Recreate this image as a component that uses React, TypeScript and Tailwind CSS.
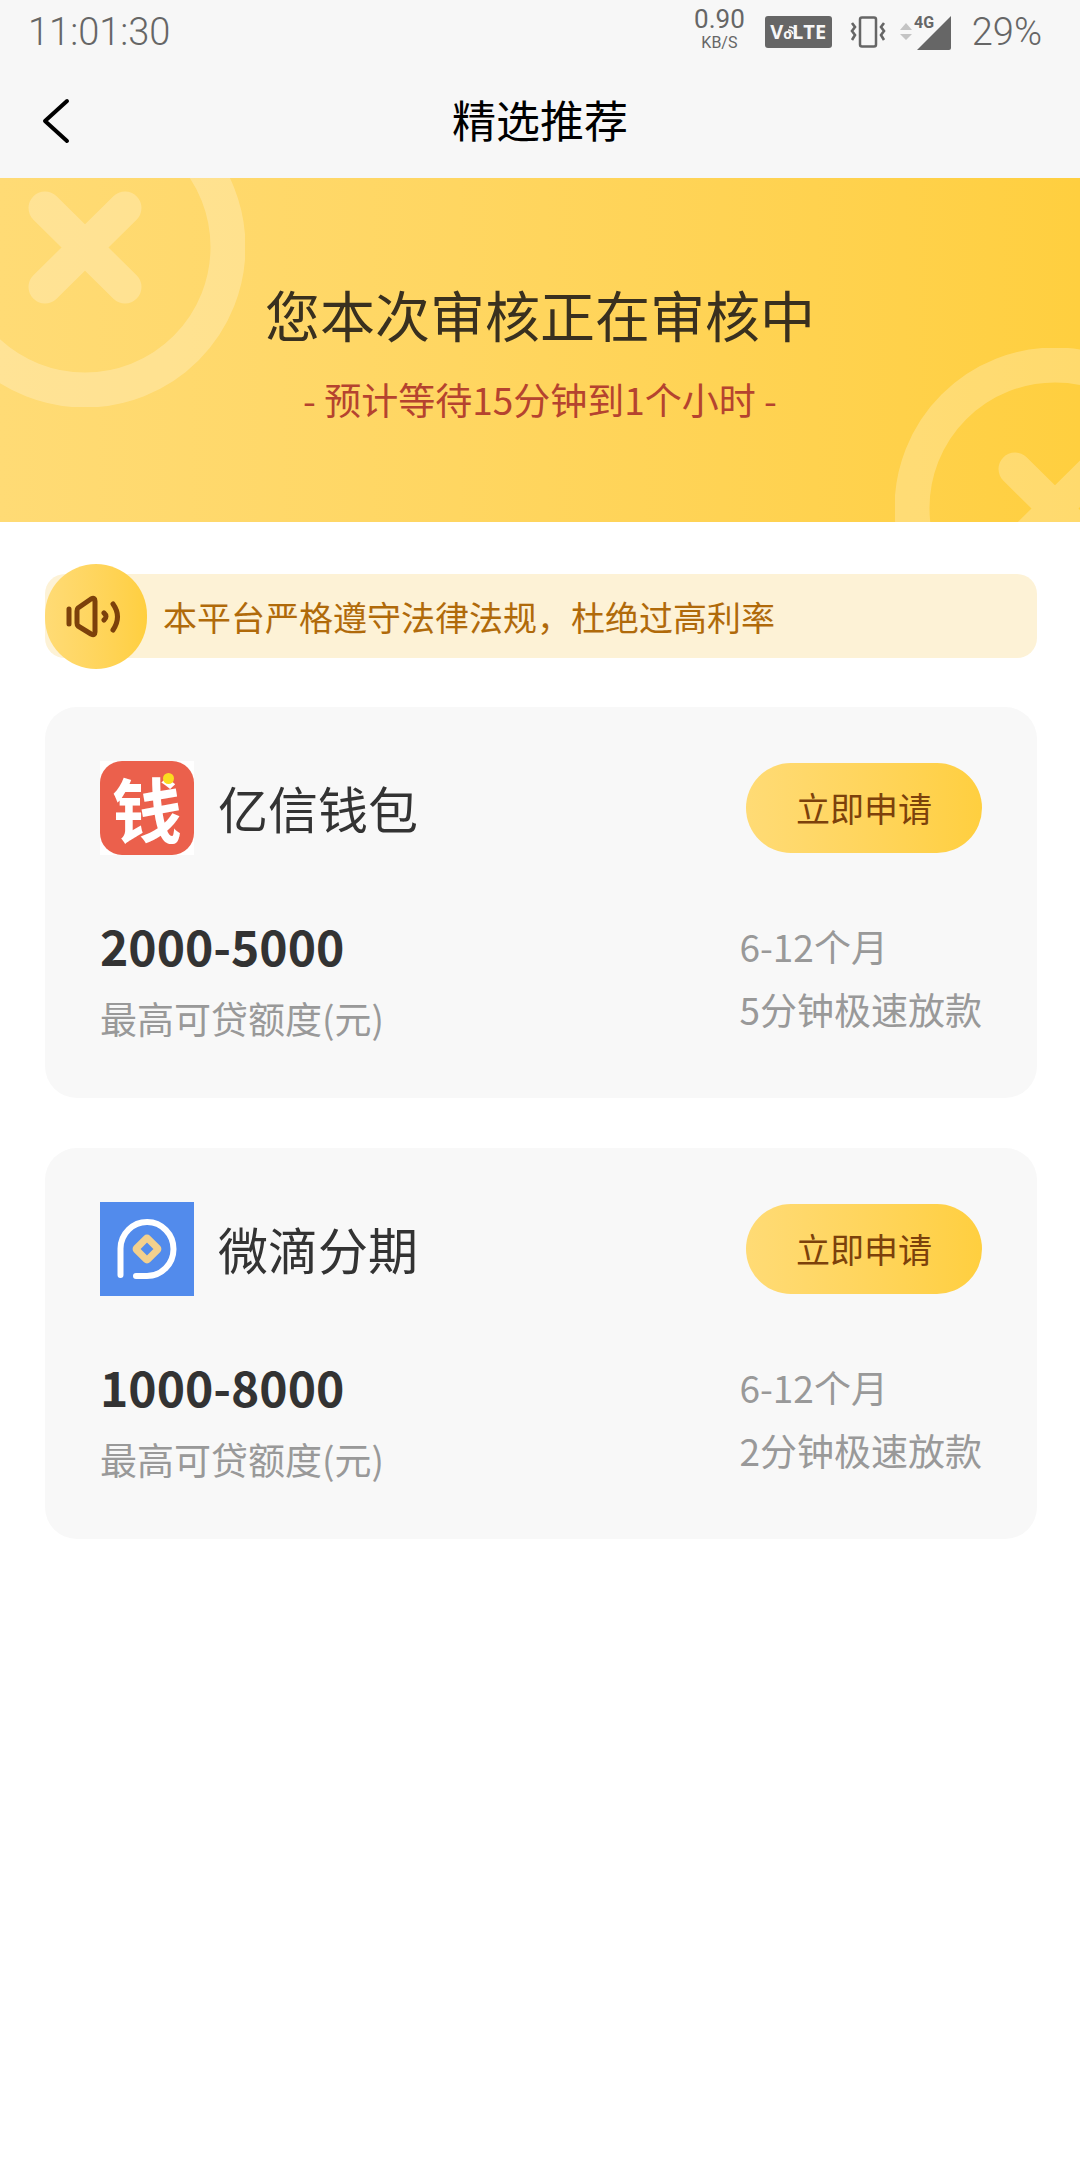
import React from 'react';

type Product = {
  id: number;
  name: string;
  logo: React.ReactNode;
  amount: string;
  period: string;
  speed: string;
};

const CoinMark: React.FC<{ className: string }> = ({ className }) => (
  <svg viewBox="0 0 320 320" className={className} fill="none" stroke="#fff" aria-hidden="true">
    <g opacity="0.24">
      <circle cx="160" cy="160" r="143" strokeWidth="35" />
      <path d="M120 121 200 200M200 121 120 200" strokeWidth="33" strokeLinecap="round" />
    </g>
  </svg>
);

const WalletLogo = () => (
  <div className="relative flex size-[94px] shrink-0 items-center justify-center bg-white">
    <div className="flex size-full items-center justify-center rounded-[22px] bg-[#eb604c] text-[70px] leading-none font-bold text-white">
      钱
    </div>
    <span className="absolute top-3 right-5 size-[11px] rounded-full bg-[#fbdd20]" />
  </div>
);

const InstallmentLogo = () => (
  <svg viewBox="0 0 94 94" className="size-[94px] shrink-0" aria-hidden="true">
    <path d="M0 0H94V94H0z" fill="#528bec" />
    <path
      d="M20.500 73V46.500A26.500 27 0 1 1 47 74H36"
      fill="none"
      stroke="#fff"
      strokeWidth="6"
      strokeLinecap="round"
    />
    <rect x="39" y="39" width="16" height="16" rx="1" fill="none" stroke="#f3d08d" strokeWidth="7" strokeLinejoin="round" transform="rotate(45 47 47)" />
  </svg>
);

const products: Product[] = [
  {
    id: 1,
    name: '亿信钱包',
    logo: <WalletLogo />,
    amount: '2000-5000',
    period: '6-12个月',
    speed: '5分钟极速放款',
  },
  {
    id: 2,
    name: '微滴分期',
    logo: <InstallmentLogo />,
    amount: '1000-8000',
    period: '6-12个月',
    speed: '2分钟极速放款',
  },
];

const StatusBar = () => (
  <div className="flex h-16 items-center justify-between pr-[38px] pl-7 font-[Roboto,sans-serif] text-[#666]">
    <span className="text-[38px] leading-none font-light">11:01:30</span>
    <div className="flex items-center">
      <div className="flex flex-col items-center pb-2">
        <span className="text-[26px] leading-[30px]">0.90</span>
        <span className="text-base leading-[18px]">KB/S</span>
      </div>
      <div className="relative ml-5 flex h-8 w-[67px] items-center justify-center rounded-[3px] bg-[#666] font-['Open_Sans',sans-serif] text-[20px] leading-none font-bold text-[#f7f7f7]">
        <span>V</span>
        <span className="pt-1 text-[14px]">o</span>
        <span>LTE</span>
        <svg viewBox="0 0 12 12" className="absolute top-2 left-[22px] size-3" fill="none" stroke="#f7f7f7" strokeWidth="1.500" aria-hidden="true">
          <path d="M1 6Q5 6 6 10M2 3Q8 3 9 8" />
        </svg>
      </div>
      <svg viewBox="0 0 36 32" className="ml-[18px] h-8 w-9" fill="none" stroke="#666" aria-hidden="true">
        <rect x="10" y="1.500" width="16" height="29" rx="2" strokeWidth="2.500" />
        <path d="M2 7 5 11 2 15 5 19 2 24M34 7 31 11 34 15 31 19 34 24" strokeWidth="2.600" />
      </svg>
      <svg viewBox="0 0 54 40" className="ml-3 h-10 w-[54px]" aria-hidden="true">
        <path d="M2 18 8 11 14 18zM2 22 8 28 14 22z" fill="#c4c4c4" />
        <path d="M53 4V36Q53 38 51 38H19z" fill="#666" />
        <text x="16" y="16" fontSize="16" fontWeight="700" fill="#666">
          4G
        </text>
      </svg>
      <span className="ml-5 text-[38px] leading-none font-light">29%</span>
    </div>
  </div>
);

const ProductCard: React.FC<{ product: Product }> = ({ product }) => (
  <li className="rounded-[32px] bg-[#f8f8f8] px-[55px] pt-[54px] pb-10">
    <div className="flex items-center justify-between">
      <div className="flex items-center gap-6">
        {product.logo}
        <h2 className="pb-[2px] text-[50px] leading-[72px] text-[#333]">{product.name}</h2>
      </div>
      <button
        type="button"
        className="h-[90px] w-[236px] rounded-full bg-linear-to-r from-[#ffdb75] to-[#ffcf3f] pb-[2px] text-[34px] text-[#7c410b]"
      >
        立即申请
      </button>
    </div>
    <div className="mt-[57px] flex justify-between">
      <div>
        <p className="text-[48px] leading-[66px] font-bold text-[#333]">{product.amount}</p>
        <p className="text-[37px] leading-[80px] text-[#999]">最高可贷额度(元)</p>
      </div>
      <div className="pt-[3px] text-[37px] leading-[63px] text-[#999]">
        <p>{product.period}</p>
        <p>{product.speed}</p>
      </div>
    </div>
  </li>
);

const App: React.FC = () => {
  return (
    <div className="min-h-screen bg-white font-['Noto_Sans_CJK_SC',sans-serif]">
      <header className="bg-[#f7f7f7]">
        <StatusBar />
        <div className="grid h-[114px] grid-cols-[1fr_auto_1fr] items-center px-9">
          <button type="button" aria-label="返回" className="size-12">
            <svg viewBox="0 0 48 48" className="size-12" fill="none" stroke="#000" strokeWidth="4" strokeLinecap="round" strokeLinejoin="round">
              <path d="M31 4 9 24 31 44" />
            </svg>
          </button>
          <h1 className="pb-1 text-[44px] leading-[64px] text-black">精选推荐</h1>
        </div>
      </header>

      <section className="relative overflow-hidden bg-linear-to-r from-[#ffdb75] to-[#ffcf3f] pt-[95px] pb-[91px] text-center">
        <CoinMark className="absolute -top-[91px] -left-[75px] size-80" />
        <CoinMark className="absolute top-[170px] -right-[135px] size-80" />
        <p className="text-[55px] leading-[80px] text-[#39301f]">您本次审核正在审核中</p>
        <p className="mt-[14px] text-[37px] leading-[64px] text-[#b5432f]">- 预计等待15分钟到1个小时 -</p>
      </section>

      <main className="pt-[52px] pr-[43px] pl-[45px]">
        <div className="relative flex h-[84px] items-center rounded-[20px] bg-[#fdf2d6] pl-[118px]">
          <div className="absolute -top-[10px] left-0 flex h-[105px] w-[102px] items-center justify-center rounded-full bg-linear-to-r from-[#ffdb75] to-[#ffcf3f]">
            <svg viewBox="2 0 56 44" className="mr-1 h-11 w-14" fill="none" stroke="#7c410b" strokeWidth="5" strokeLinecap="round" strokeLinejoin="round" aria-hidden="true">
              <path d="M5 14V29M14 13 27 4Q31 2 31 6V37Q31 41 27 39L14 31Q13 30 13 28V16Q13 14 14 13z" />
              <path d="M40 18Q44 21.500 40 25M49 9Q58 21.500 49 35" />
            </svg>
          </div>
          <p className="pt-[2px] text-[34px] leading-[50px] text-[#b06a0a]">本平台严格遵守法律法规，杜绝过高利率</p>
        </div>

        <ul className="mt-[49px] flex flex-col gap-[50px]">
          {products.map((item) => (
            <ProductCard key={item.id} product={item} />
          ))}
        </ul>
      </main>
    </div>
  );
};

export default App;
